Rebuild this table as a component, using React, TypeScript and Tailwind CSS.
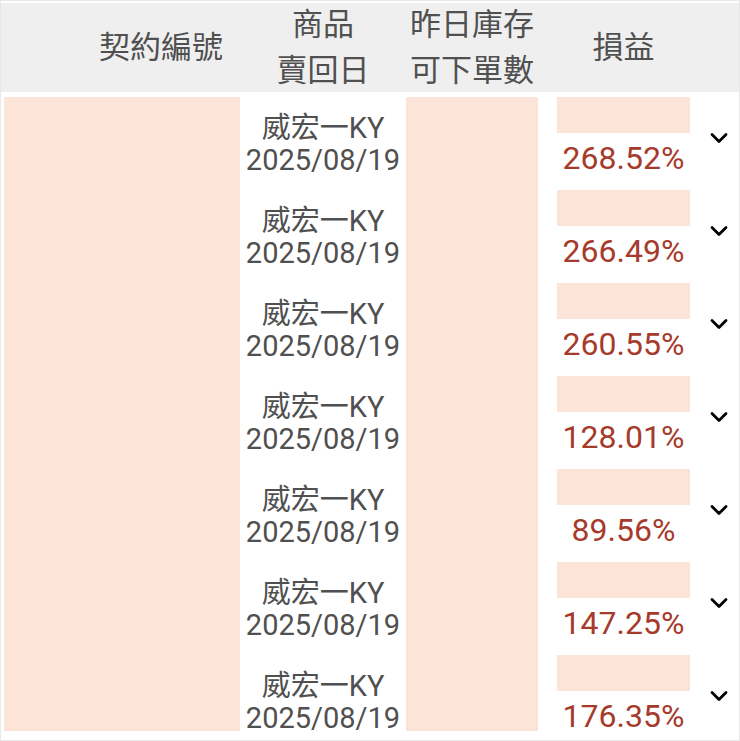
import { ChevronDown } from "lucide-react";

const rows = [
  { name: "威宏一KY", date: "2025/08/19", pnl: "268.52%" },
  { name: "威宏一KY", date: "2025/08/19", pnl: "266.49%" },
  { name: "威宏一KY", date: "2025/08/19", pnl: "260.55%" },
  { name: "威宏一KY", date: "2025/08/19", pnl: "128.01%" },
  { name: "威宏一KY", date: "2025/08/19", pnl: "89.56%" },
  { name: "威宏一KY", date: "2025/08/19", pnl: "147.25%" },
  { name: "威宏一KY", date: "2025/08/19", pnl: "176.35%" },
];

export default function App() {
  return (
    <div
      className="w-[740px] h-[741px] bg-white border border-[#e8e8e8] flex flex-col overflow-hidden text-[#505050]"
      style={{ fontFamily: 'Roboto, "Noto Sans CJK TC", sans-serif' }}
    >
      {/* header */}
      <div className="mt-[2px] h-[89px] shrink-0 bg-[#efefef] flex items-center pl-[3px] text-[31px] leading-[46px]">
        <div className="w-[236px] pl-[78px] text-center">契約編號</div>
        <div className="w-[166px] text-center">
          <div>商品</div>
          <div>賣回日</div>
        </div>
        <div className="w-[132px] text-center">
          <div>昨日庫存</div>
          <div>可下單數</div>
        </div>
        <div className="w-[19px]" />
        <div className="w-[133px] text-center">損益</div>
      </div>

      {/* body */}
      <div className="flex-1 min-h-0 pt-[5px] pb-[9px] pl-[3px] flex flex-col">
        <div className="flex-1 min-h-0 overflow-hidden">
          {rows.map((r, i) => (
            <div key={i} className="h-[93px] flex">
              <div className="w-[236px] bg-[#fde4d9]" />
              <div className="w-[166px] flex flex-col justify-center items-center text-[29px] leading-[32px]">
                <div>{r.name}</div>
                <div>{r.date}</div>
              </div>
              <div className="w-[132px] bg-[#fde4d9]" />
              <div className="w-[19px]" />
              <div className="w-[133px] flex flex-col">
                <div className="h-[36px] bg-[#fde4d9]" />
                <div className="mt-[11px] text-center text-[32px] leading-[28px] text-[#a63a2b]">{r.pnl}</div>
              </div>
              <div className="flex-1 flex justify-center items-start pt-[27px] pl-[9px]">
                <ChevronDown size={28} strokeWidth={2.4} className="text-black" />
              </div>
            </div>
          ))}
        </div>
      </div>
    </div>
  );
}
